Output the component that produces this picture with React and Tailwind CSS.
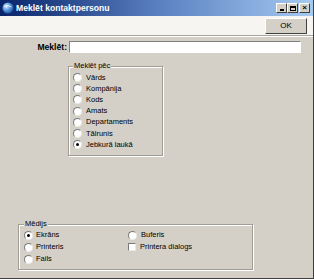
import React from "react";

const FONT = { fontFamily: '"Liberation Sans", Arial, sans-serif' };

function Radio({ checked }) {
  return (
    <span className="relative inline-flex w-[9px] h-[9px] shrink-0 items-center justify-center rounded-full bg-white border border-t-[#7b7b7b] border-l-[#7b7b7b] border-r-[#ece9e4] border-b-[#ece9e4]">
      {checked && <span className="w-[3px] h-[3px] rounded-full bg-black" />}
    </span>
  );
}

function Check() {
  return (
    <span className="inline-block w-[8px] h-[8px] shrink-0 bg-white border border-t-[#7b7b7b] border-l-[#7b7b7b] border-r-[#ece9e4] border-b-[#ece9e4]" />
  );
}

function Option({ label, checked, box, gap = "gap-[4px]", h = "h-[11.17px]" }) {
  return (
    <div className={`flex items-center ${gap} ${h}`}>
      {box ? <Check /> : <Radio checked={checked} />}
      <span className="text-[7.5px] leading-none text-black">{label}</span>
    </div>
  );
}

function CaptionBtn({ children }) {
  return (
    <div className="w-[11px] h-[10px] bg-[#d4d0c8] border border-t-white border-l-white border-r-[#404040] border-b-[#404040] flex items-center justify-center">
      {children}
    </div>
  );
}

export default function App() {
  const felter = ["Vārds", "Kompānija", "Kods", "Amats", "Departaments", "Tālrunis", "Jebkurā laukā"];

  return (
    <div className="w-[314px] h-[279px] bg-[#d4d0c8] flex flex-col overflow-hidden border-r border-b border-r-[#404040] border-b-[#404040]" style={FONT}>
      {/* title bar */}
      <div className="h-[16px] shrink-0 flex items-center bg-linear-to-r from-[#0a246a] via-[#5a7fc0] to-[#a6caf0] pl-[2px] pr-[3px]">
        <svg width="12" height="12" viewBox="0 0 12 12" className="shrink-0">
          <defs>
            <radialGradient id="g" cx="0.35" cy="0.35" r="0.7">
              <stop offset="0" stopColor="#e6f2ff" />
              <stop offset="0.5" stopColor="#5a9be0" />
              <stop offset="1" stopColor="#1c4f9c" />
            </radialGradient>
          </defs>
          <circle cx="6" cy="6" r="5.5" fill="url(#g)" />
          <path d="M2.5 4.5 Q6 2 9.5 5" stroke="#ffffff" strokeWidth="1" fill="none" opacity="0.7" />
        </svg>
        <span className="ml-[2px] text-[8.6px] font-bold text-white leading-none">Meklēt kontaktpersonu</span>
        <div className="ml-auto flex items-center">
          <CaptionBtn>
            <span className="w-[4px] h-[1.5px] bg-black mt-[4px]" />
          </CaptionBtn>
          <CaptionBtn>
            <span className="w-[6px] h-[5px] border border-black border-t-2" />
          </CaptionBtn>
          <div className="ml-[1px]">
            <CaptionBtn>
              <span className="text-[8px] leading-none font-bold text-black">×</span>
            </CaptionBtn>
          </div>
        </div>
      </div>

      {/* toolbar */}
      <div className="h-[20px] shrink-0 bg-[#f6f5f2] flex items-start justify-end pr-[6px] pt-[2px] border-b border-[#a8a59f]">
        <button className="w-[42px] h-[16px] bg-[#d4d0c8] border border-t-white border-l-white border-r-[#404040] border-b-[#404040] text-[8px] leading-none text-black flex items-center justify-center">
          OK
        </button>
      </div>

      {/* body */}
      <div className="flex-1 flex flex-col border-t border-white">
        <div className="flex items-center mt-[4px] h-[12px]">
          <span className="w-[68px] text-right pr-[1px] text-[8.6px] font-bold leading-none text-black">Meklēt:</span>
          <div className="ml-[1px] w-[232px] h-[12px] bg-white border border-t-[#808080] border-l-[#808080] border-r-white border-b-white" />
        </div>

        <div className="relative ml-[68px] mt-[13px] w-[95px] h-[90px] border border-[#a09d96] shadow-[inset_1px_1px_0_#ffffff,1px_1px_0_#ffffff] pl-[4px] pt-[5px]">
          <span className="absolute -top-[5px] left-[4px] px-px bg-[#d4d0c8] text-[7.5px] leading-none text-black">Meklēt pēc</span>
          {felter.map((f, i) => (
            <Option key={f} label={f} checked={i === felter.length - 1} />
          ))}
        </div>

        <div className="relative ml-[18px] mt-[68px] w-[235px] h-[46px] border border-[#a09d96] shadow-[inset_1px_1px_0_#ffffff,1px_1px_0_#ffffff] pl-[5px] pt-[4px] flex">
          <span className="absolute -top-[5px] left-[5px] px-px bg-[#d4d0c8] text-[7.5px] leading-none text-black">Mēdijs</span>
          <div className="w-[104px] flex flex-col">
            <Option label="Ekrāns" checked gap="gap-[3px]" h="h-[12px]" />
            <Option label="Printeris" gap="gap-[3px]" h="h-[12px]" />
            <Option label="Fails" gap="gap-[3px]" h="h-[12px]" />
          </div>
          <div className="flex flex-col">
            <Option label="Buferis" gap="gap-[4px]" h="h-[12px]" />
            <Option label="Printera dialogs" box gap="gap-[4px]" h="h-[12px]" />
          </div>
        </div>
      </div>
    </div>
  );
}
